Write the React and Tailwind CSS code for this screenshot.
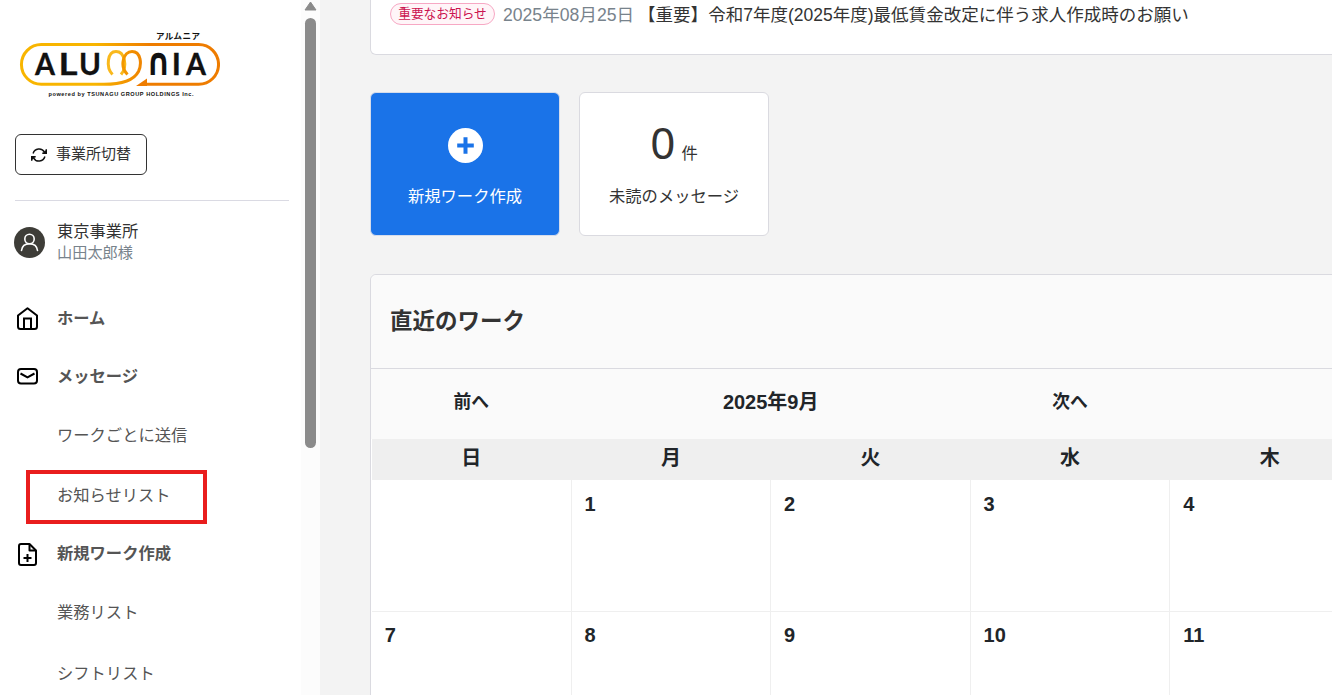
const weekdays = ['日', '月', '火', '水', '木']
const weeks = [
  ['', 1, 2, 3, 4],
  [7, 8, 9, 10, 11],
]

const menu = [
  { label: 'ホーム', icon: HomeIcon, height: 'h-[58px]' },
  { label: 'メッセージ', icon: MailIcon, height: 'h-[58px]' },
  { label: 'ワークごとに送信', height: 'h-[60px]' },
  { label: 'お知らせリスト', height: 'h-[60px]', marked: true },
  { label: '新規ワーク作成', icon: FileIcon, height: 'h-[57px]' },
  { label: '業務リスト', height: 'h-[61px]' },
  { label: 'シフトリスト', height: 'h-[60px]' },
]

function Logo() {
  return (
    <svg className="block shrink-0" width="220" height="100" viewBox="0 0 220 100">
      <defs>
        <linearGradient id="ring" gradientUnits="userSpaceOnUse" x1="95" y1="0" x2="150" y2="0">
          <stop offset="0" stopColor="#f8b500" />
          <stop offset="1" stopColor="#ee7c00" />
        </linearGradient>
      </defs>
      <path d="M112.500 74.500C105.500 67 107.500 51.500 116 51.500C124.500 51.500 128 66 121 74.500" fill="none" stroke="#f9b81c" strokeWidth="3" />
      <g fill="none" stroke="url(#ring)" strokeWidth="3">
        <path d="M146 84.300H198.700A19.850 19.850 0 0 0 198.700 44.600H41.300A19.850 19.850 0 0 0 41.300 84.300H104C122 84.300 134 80 138.500 71.500C142 64 141 51.500 132 51.500C123.500 51.500 119 66 127.500 74.500" />
      </g>
      <path d="M136 85.900L147 78.500V85.900Z" fill="#ee7c00" />
      <g fill="#111" stroke="#111" strokeWidth="0.300" fontFamily="Lato, sans-serif" fontWeight="700" fontSize="31">
        <text x="35" y="75.300" textLength="20" lengthAdjust="spacingAndGlyphs">A</text>
        <text x="58.500" y="75.300" textLength="19" lengthAdjust="spacingAndGlyphs">L</text>
        <text x="79" y="75.300" textLength="22" lengthAdjust="spacingAndGlyphs">U</text>
        <text x="146" y="75.300" stroke="none" fontFamily="DejaVu Sans" fontSize="38.500" textLength="25" lengthAdjust="spacingAndGlyphs">∩</text>
        <text x="171.700" y="75.300">I</text>
        <text x="186" y="75.300" textLength="20" lengthAdjust="spacingAndGlyphs">A</text>
      </g>
      <text x="156" y="39" fill="#111" fontFamily="Noto Sans CJK JP, sans-serif" fontWeight="700" fontSize="8.500" textLength="44">アルムニア</text>
      <text x="48.500" y="96" fill="#111" fontFamily="Liberation Sans, sans-serif" fontWeight="700" fontSize="5.600" textLength="145">powered by TSUNAGU GROUP HOLDINGS Inc.</text>
    </svg>
  )
}

function SwitchIcon() {
  return (
    <svg className="shrink-0" width="16" height="14" viewBox="0 0 16 14" fill="none" stroke="#111" strokeWidth="1.5">
      <path d="M2.100 5.500A6.200 6.200 0 0 1 13.500 4.200M13.900 8.500A6.200 6.200 0 0 1 2.500 9.800" />
      <path d="M15.300 1.200V5.200H11.300M.7 12.800V8.800H4.700" />
      <path d="M15.300 1.800V5.200H11.700ZM.7 12.200V8.800H4.300Z" fill="#111" stroke="none" />
    </svg>
  )
}

function HomeIcon() {
  return (
    <svg className="mt-px" width="21" height="23" viewBox="0 0 21 23" fill="none" stroke="#000" strokeWidth="2" strokeLinejoin="round">
      <path d="M1 8.500L10.500 1.200L20 8.500V19.500A2.500 2.500 0 0 1 17.500 22H3.500A2.500 2.500 0 0 1 1 19.500Z" />
      <path d="M7 22V11.500H14V22" strokeLinejoin="miter" />
    </svg>
  )
}

function MailIcon() {
  return (
    <svg width="21" height="18" viewBox="0 0 21 18" fill="none" stroke="#000" strokeWidth="2">
      <rect x="1" y="2" width="19" height="14.500" rx="3" />
      <path d="M3.500 6.500L10.500 10.300L17.500 6.500" />
    </svg>
  )
}

function FileIcon() {
  return (
    <svg className="mt-px" width="21" height="23" viewBox="0 0 21 23" fill="none" stroke="#000" strokeWidth="2" strokeLinejoin="round">
      <path d="M12.500 1H4A2 2 0 0 0 2 3V20A2 2 0 0 0 4 22H17A2 2 0 0 0 19 20V7.500Z" />
      <path d="M12.500 1V7.500H19M10.500 11V19M6.500 15H14.500" />
    </svg>
  )
}

function Sidebar() {
  return (
    <aside className="w-[301px] shrink-0 bg-white">
      <Logo />
      <button className="mt-[34px] ml-[15px] flex h-[41px] w-[132px] items-center gap-[9px] rounded-[6px] border border-[#333] pl-[15px] text-[15px] text-[#333]">
        <SwitchIcon />
        <span className="whitespace-nowrap">事業所切替</span>
      </button>
      <div className="mt-[25px] mr-3 ml-[15px] h-px bg-[#dadae3]" />
      <div className="mt-[19px] ml-[14px] flex h-11 items-center gap-3">
        <svg width="31" height="31" viewBox="0 0 31 31" fill="none" stroke="#fff" strokeWidth="1.6" strokeLinecap="round">
          <circle cx="15.500" cy="15.500" r="15.500" fill="#3e3d38" stroke="none" />
          <circle cx="15.500" cy="12" r="4.700" />
          <path d="M7.500 23.500C8 19.500 11 16.800 15.500 16.800C20 16.800 23 19.500 23.500 23.500" />
        </svg>
        <div className="leading-[22px]">
          <div className="text-[16.25px] text-[#333]">東京事業所</div>
          <div className="text-[15.2px] text-[#78838c]">山田太郎様</div>
        </div>
      </div>
      <nav className="mt-[25px] text-[16.3px] text-[#555]">
        {menu.map(({ label, icon: Icon, height, marked }) => (
          <div key={label} className={`relative flex items-center ${height}`}>
            <span className="ml-[17px] flex w-10 shrink-0 items-center">{Icon && <Icon />}</span>
            <span className={Icon ? 'font-bold' : ''}>{label}</span>
            {marked && <div className="absolute top-[5px] left-[26px] h-[54px] w-[181px] border-4 border-[#e91d1d]" />}
          </div>
        ))}
      </nav>
    </aside>
  )
}

function ScrollBar() {
  return (
    <div className="flex w-[19px] shrink-0 flex-col items-center bg-[#fcfcfc]">
      <svg className="mt-px shrink-0" width="13" height="10" viewBox="0 0 13 10">
        <path d="M6.500 1L12 9H1Z" fill="#8b8b8b" stroke="#8b8b8b" strokeLinejoin="round" />
      </svg>
      <div className="mt-[7px] h-[430px] w-[11px] rounded-full bg-[#8b8b8b]" />
    </div>
  )
}

function Notice() {
  return (
    <section className="flex h-[55px] w-[1400px] items-start rounded-b-[6px] border border-t-0 border-[#dadae0] bg-white pl-[19px] text-[17.5px] leading-[30px] whitespace-nowrap">
      <span className="mt-[3px] flex h-[22px] w-[105px] items-center justify-center rounded-full border border-[#f7a8c4] bg-[#fff5f8] text-[12.7px] text-[#cb1450]">重要なお知らせ</span>
      <span className="ml-[8px] text-[17.6px] text-[#78838c]">2025年08月25日</span>
      <span className="ml-[4px] text-[17.53px] text-[#333]">【重要】令和7年度(2025年度)最低賃金改定に伴う求人作成時のお願い</span>
    </section>
  )
}

function Calendar() {
  return (
    <section className="mt-[38px] w-[1400px] rounded-[6px] border border-[#dadae0] bg-white">
      <h2 className="flex h-[94px] items-center rounded-t-[6px] border-b border-[#dadae0] bg-[#fafafa] pl-[19px] text-[22.5px] font-bold text-[#333]">直近のワーク</h2>
      <div className="grid h-[70px] grid-cols-[repeat(5,199.6px)] items-center bg-[#fafafa] pb-1 pl-[0.5px] text-center font-bold text-[#212529]">
        <div className="text-[17.8px]">前へ</div>
        <div className="col-span-2 text-[20px]">2025年9月</div>
        <div className="text-[17.8px]">次へ</div>
      </div>
      <div className="ml-px h-[41px] bg-[#efefef]">
        <div className="-ml-px grid grid-cols-[repeat(5,199.6px)] pl-[0.5px] text-center text-[20px] leading-[39px] font-bold text-[#212529]">
          {weekdays.map((d) => <div key={d}>{d}</div>)}
        </div>
      </div>
      {weeks.map((week, i) => (
        <div key={i} className="ml-px grid h-[131.5px] grid-cols-[repeat(5,199.6px)] border-b border-[#efefef] text-[20px] font-bold text-[#212529]">
          {week.map((d, j) => (
            <div key={j} className="border-r border-[#efefef] pt-[8.5px] pl-[12.8px] leading-[30px]">{d}</div>
          ))}
        </div>
      ))}
    </section>
  )
}

export default function App() {
  return (
    <div className="flex h-[695px] w-[1332px] overflow-hidden bg-[#f3f3f3] font-['Liberation_Sans','Noto_Sans_CJK_JP',sans-serif]" lang="ja">
      <Sidebar />
      <ScrollBar />
      <main className="min-w-0 flex-1 overflow-hidden pl-[50px]">
        <Notice />
        <div className="mt-[37px] flex gap-[19px] text-[16.3px]">
          <button className="flex h-36 w-[190px] flex-col items-center rounded-[6px] border border-[#d5dceb] bg-[#1a73e8] pt-[35px] text-white">
            <svg width="35" height="35" viewBox="0 0 35 35">
              <circle cx="17.500" cy="17.500" r="17.500" fill="#fff" />
              <path d="M17.500 9.200V25.800M9.200 17.500H25.800" stroke="#1a73e8" strokeWidth="4" />
            </svg>
            <span className="mt-[21px] leading-6">新規ワーク作成</span>
          </button>
          <div className="flex h-36 w-[190px] flex-col items-center rounded-[6px] border border-[#dadae0] bg-white pt-[20px] text-[#333]">
            <div className="flex h-[60px] items-baseline gap-[6px] leading-[60px]">
              <span className="font-['Noto_Sans',sans-serif] text-[44px] leading-[58px]">0</span>
              <span className="leading-none">件</span>
            </div>
            <span className="mt-[11px] leading-6">未読のメッセージ</span>
          </div>
        </div>
        <Calendar />
      </main>
    </div>
  )
}
